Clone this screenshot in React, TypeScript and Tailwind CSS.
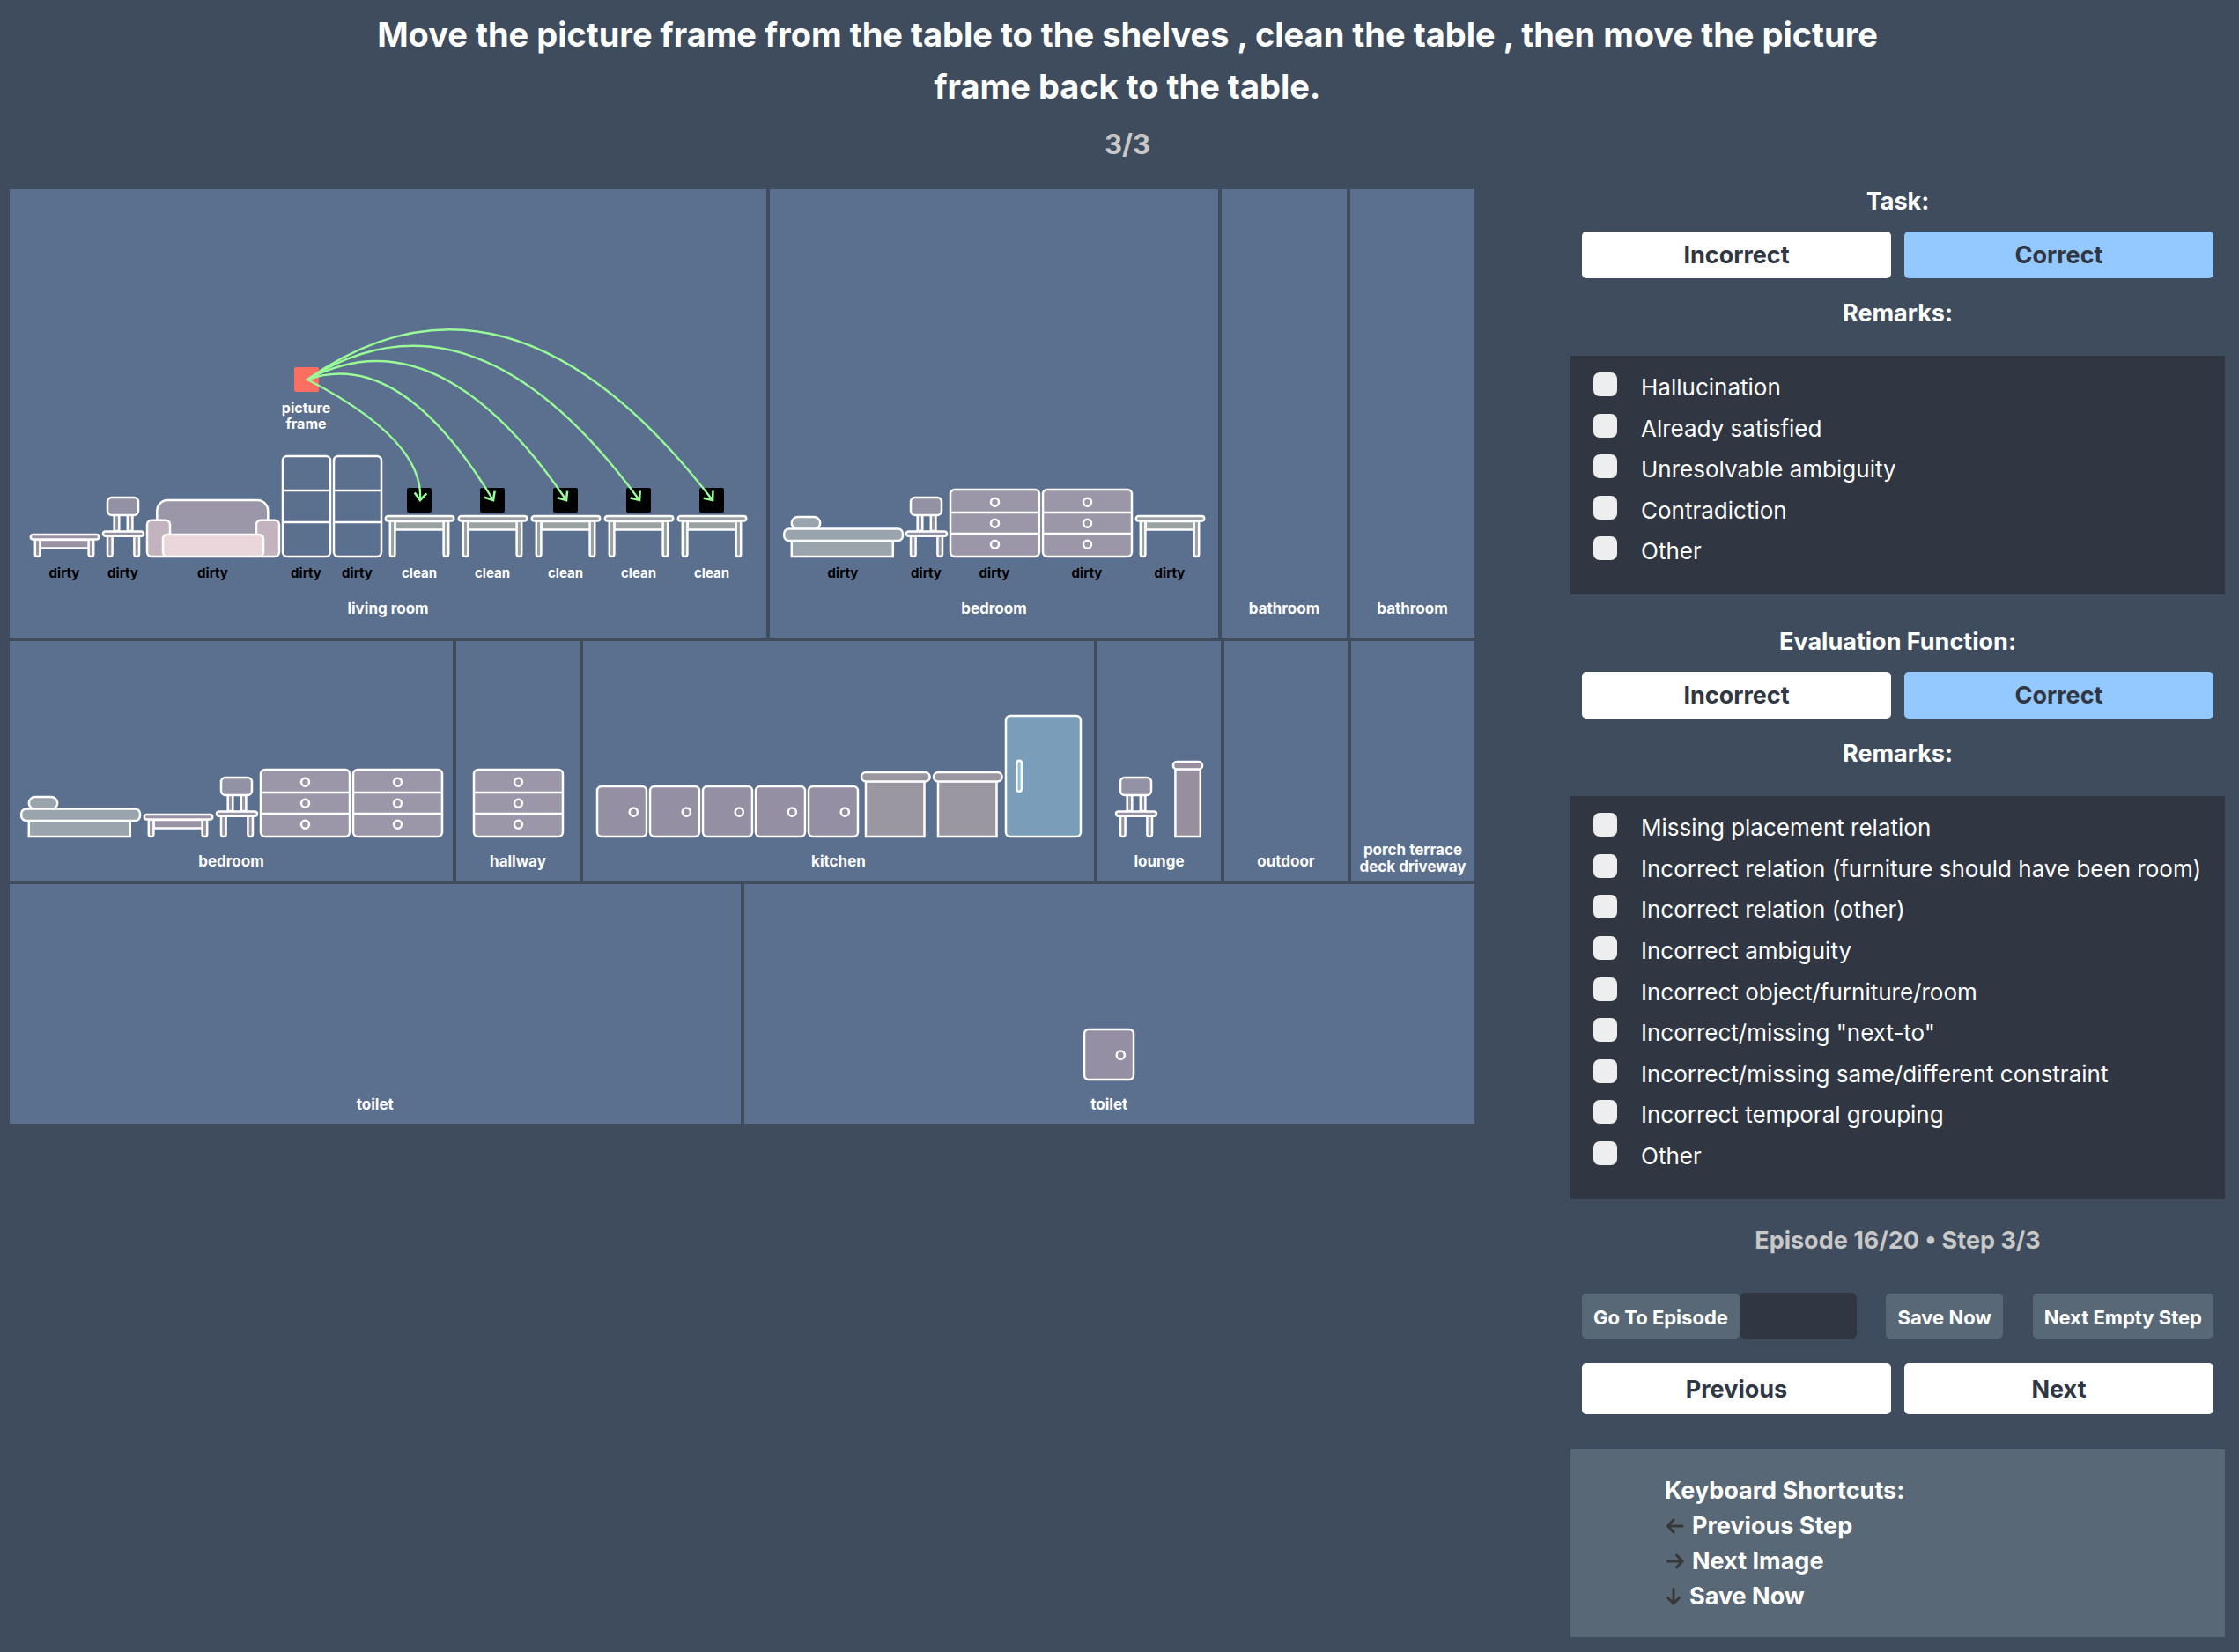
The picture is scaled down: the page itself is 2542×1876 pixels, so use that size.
import { useState, type ReactNode } from "react";

type Kind =
  | "coffee"
  | "chair"
  | "sofa"
  | "shelf"
  | "table"
  | "bed"
  | "dresser"
  | "cabinet"
  | "counter"
  | "fridge"
  | "stand";

const SIZES: Record<Kind, [number, number]> = {
  coffee: [81, 27],
  chair: [48, 69],
  sofa: [152, 66],
  shelf: [56, 116],
  table: [81, 48],
  bed: [137, 47],
  dresser: [103, 78],
  cabinet: [58, 59],
  counter: [80, 75],
  fridge: [87, 139],
  stand: [35, 87],
};

function TableShape({ height, fill }: { height: number; fill: string }) {
  return (
    <g fill={fill}>
      <rect x="12.5" y="7" width="56" height="9.5" />
      <rect x="6.8" y="6" width="5.6" height={height - 7} rx="2.8" />
      <rect x="67.6" y="6" width="5.6" height={height - 7} rx="2.8" />
      <rect x="1.8" y="1" width="77.4" height="5.4" rx="2.7" />
    </g>
  );
}

const SHAPES: Record<Kind, ReactNode> = {
  coffee: <TableShape height={27} fill="#9892a4" />,
  table: <TableShape height={48} fill="#9aa1a3" />,
  chair: (
    <g fill="#9392a5">
      <rect x="13.7" y="20" width="5.6" height="19" />
      <rect x="28.8" y="20" width="5.6" height="19" />
      <rect x="6" y="43" width="5.6" height="25" rx="2.8" />
      <rect x="36.4" y="43" width="5.6" height="25" rx="2.8" />
      <rect x="6" y="1" width="35" height="20" rx="5" />
      <rect x="1" y="39.4" width="46" height="5.4" rx="2.7" />
    </g>
  ),
  sofa: (
    <g>
      <path d="M12.3 50V13a12 12 0 0 1 12-12h102a12 12 0 0 1 12 12v37z" fill="#9b97a9" />
      <rect x="1" y="23.7" width="26" height="41.3" rx="5" fill="#c3b3be" />
      <rect x="125" y="23.7" width="26" height="41.3" rx="5" fill="#c3b3be" />
      <rect x="19" y="40" width="114" height="25" rx="5" fill="#e9d7db" />
    </g>
  ),
  shelf: (
    <g fill="none">
      <rect x="1" y="1" width="54" height="114" rx="5" />
      <path d="M1 40h54M1 76h54" />
    </g>
  ),
  bed: (
    <g fill="#9aa4ac">
      <rect x="9.8" y="28" width="115" height="18" />
      <rect x="9.8" y="1" width="32.4" height="14" rx="7" />
      <rect x="1.2" y="14.6" width="134.8" height="13.4" rx="5.5" />
    </g>
  ),
  dresser: (
    <g fill="#9b97a9">
      <rect x="1" y="1" width="101" height="76" rx="5" />
      <path d="M1 27h101M1 51h101" />
      <circle cx="51.5" cy="15.3" r="4.5" />
      <circle cx="51.5" cy="39.3" r="4.5" />
      <circle cx="51.5" cy="63.3" r="4.5" />
    </g>
  ),
  cabinet: (
    <g fill="#948fa2">
      <rect x="1" y="1" width="56" height="57" rx="5" />
      <circle cx="42.3" cy="30.2" r="4.6" />
    </g>
  ),
  counter: (
    <g fill="#9a97a1">
      <rect x="6" y="11" width="66.5" height="63" />
      <rect x="1" y="1" width="77.6" height="10.4" rx="5.2" />
    </g>
  ),
  fridge: (
    <g fill="#7a9db9">
      <rect x="1" y="1" width="85" height="137" rx="5" />
      <rect x="13.3" y="51.7" width="5.6" height="35" rx="2.8" fill="#8dc0d8" />
    </g>
  ),
  stand: (
    <g fill="#978f9e">
      <rect x="3.4" y="9" width="28.4" height="77" />
      <rect x="1" y="1" width="33" height="8.4" rx="4" />
    </g>
  ),
};

function Furniture({ kind }: { kind: Kind }) {
  const [w, h] = SIZES[kind];
  return (
    <svg width={w} height={h} viewBox={`0 0 ${w} ${h}`} stroke="#ffffff" strokeWidth="2.5" className="block shrink-0 overflow-visible" aria-hidden="true">
      {SHAPES[kind]}
    </svg>
  );
}

function Item({ kind, state, children }: { kind: Kind; state?: "dirty" | "clean"; children?: ReactNode }) {
  return (
    <div className="flex flex-col items-center">
      {children}
      <Furniture kind={kind} />
      {state && (
        <span className={state === "dirty" ? "mt-[9px] text-[15px] leading-[18px] text-black" : "mt-[9px] text-[15px] leading-[18px] text-white"}>
          {state}
        </span>
      )}
    </div>
  );
}

function Room({ name, tall, wide, children }: { name: string; tall?: boolean; wide?: boolean; children?: ReactNode }) {
  return (
    <section className={tall ? "flex flex-col items-center justify-end bg-[#5b6f8e] pb-[17px]" : "flex flex-col items-center justify-end bg-[#5b6f8e] pb-[6px]"}>
      <div className={tall ? "relative mb-4 flex items-end gap-[2px]" : wide ? "relative mb-3 flex items-end gap-[17px]" : "relative mb-3 flex items-end gap-[2px]"}>
        {children}
      </div>
      <h3 className="flex min-h-[31px] max-w-[130px] items-center text-center text-[17px] leading-[19px]">{name}</h3>
    </section>
  );
}

// Centre of the picture frame and of each target slot, in the living-room group's own space.
const ORIGIN = { x: 316, y: 88 };
const TARGETS = [444, 527, 610, 693, 776];
const TARGET_Y = 225;

function arcTo(x: number) {
  const dx = x - ORIGIN.x;
  const dy = TARGET_Y - ORIGIN.y;
  const mx = (x + ORIGIN.x) / 2;
  const my = (TARGET_Y + ORIGIN.y) / 2;
  const [cx, cy] = dx > dy ? [mx, my - dx / 2] : [mx + dy / 2, my];
  return `M${ORIGIN.x} ${ORIGIN.y}Q${cx} ${cy} ${x} ${TARGET_Y}`;
}

function Moves() {
  return (
    <svg width="816" height="317" viewBox="0 0 816 317" className="pointer-events-none absolute bottom-0 left-0" fill="none" stroke="#98fb98" strokeWidth="2.4" aria-hidden="true">
      <defs>
        <marker id="tip" markerUnits="userSpaceOnUse" markerWidth="24" markerHeight="24" viewBox="-12 -12 24 24" orient="auto">
          <path d="M-8 -6.8L0 0L-8 6.8" strokeWidth="2.6" />
        </marker>
      </defs>
      {TARGETS.map((x) => (
        <path key={x} d={arcTo(x)} strokeLinecap="round" markerEnd="url(#tip)" />
      ))}
    </svg>
  );
}

function House() {
  return (
    <div className="flex flex-col gap-1 font-bold text-white">
      <div className="grid min-h-[509px] grid-cols-[859fr_509fr_142fr_141fr] gap-1">
        <Room name="living room" tall>
          <Item kind="coffee" state="dirty" />
          <Item kind="chair" state="dirty" />
          <Item kind="sofa" state="dirty" />
          <Item kind="shelf" state="dirty">
            <div className="size-7 rounded-[2px] bg-[#ff6f61]" />
            <span className="mt-[9px] mb-[27px] text-center text-[16px] leading-[18px]">
              picture
              <br />
              frame
            </span>
          </Item>
          <Item kind="shelf" state="dirty" />
          {TARGETS.map((x) => (
            <Item key={x} kind="table" state="clean">
              <div className="mb-[3px] size-7 rounded-[2px] bg-black" />
            </Item>
          ))}
          <Moves />
        </Room>
        <Room name="bedroom" tall>
          <Item kind="bed" state="dirty" />
          <Item kind="chair" state="dirty" />
          <Item kind="dresser" state="dirty" />
          <Item kind="dresser" state="dirty" />
          <Item kind="table" state="dirty" />
        </Room>
        <Room name="bathroom" tall />
        <Room name="bathroom" tall />
      </div>
      <div className="grid min-h-[272px] grid-cols-[503fr_140fr_580fr_140fr_140fr_140fr] gap-1">
        <Room name="bedroom">
          <Item kind="bed" />
          <Item kind="coffee" />
          <Item kind="chair" />
          <Item kind="dresser" />
          <Item kind="dresser" />
        </Room>
        <Room name="hallway">
          <Item kind="dresser" />
        </Room>
        <Room name="kitchen">
          <Item kind="cabinet" />
          <Item kind="cabinet" />
          <Item kind="cabinet" />
          <Item kind="cabinet" />
          <Item kind="cabinet" />
          <Item kind="counter" />
          <Item kind="counter" />
          <Item kind="fridge" />
        </Room>
        <Room name="lounge" wide>
          <Item kind="chair" />
          <Item kind="stand" />
        </Room>
        <Room name="outdoor" />
        <Room name="porch terrace deck driveway" />
      </div>
      <div className="grid min-h-[272px] grid-cols-2 gap-1">
        <Room name="toilet" />
        <Room name="toilet">
          <Item kind="cabinet" />
        </Room>
      </div>
    </div>
  );
}

const TASK_REMARKS = ["Hallucination", "Already satisfied", "Unresolvable ambiguity", "Contradiction", "Other"];
const EVAL_REMARKS = [
  "Missing placement relation",
  "Incorrect relation (furniture should have been room)",
  "Incorrect relation (other)",
  "Incorrect ambiguity",
  "Incorrect object/furniture/room",
  'Incorrect/missing "next-to"',
  "Incorrect/missing same/different constraint",
  "Incorrect temporal grouping",
  "Other",
];

function Review({ title, remarks, long }: { title: string; remarks: string[]; long?: boolean }) {
  const [verdict, setVerdict] = useState("Correct");
  return (
    <section>
      <h2 className="mb-[13px] text-center text-[27px] leading-[42px] font-bold text-white">{title}</h2>
      <div className="grid grid-cols-2 gap-[15px] px-[13px]">
        {["Incorrect", "Correct"].map((label) => (
          <button
            key={label}
            type="button"
            aria-pressed={verdict === label}
            onClick={() => setVerdict(label)}
            className={
              verdict === label
                ? "h-[53px] rounded-[5px] bg-[#94c9ff] text-[27px] leading-[42px] font-bold text-[#303642]"
                : "h-[53px] rounded-[5px] bg-white text-[27px] leading-[42px] font-bold text-[#303642]"
            }
          >
            {label}
          </button>
        ))}
      </div>
      <h3 className="mt-[19px] mb-[27px] text-center text-[27px] leading-[42px] font-bold text-white">Remarks:</h3>
      <div className="bg-[#303642] px-[26px] pt-[19px] pb-[39px]">
        <ul className={long ? "flex min-h-[400px] flex-col justify-between" : "flex min-h-[213px] flex-col justify-between"}>
          {remarks.map((remark) => (
            <li key={remark}>
              <label className="flex h-[27px] items-start text-[26px] text-white">
                <input type="checkbox" className="mr-[27px] size-[27px] shrink-0 appearance-none rounded-[7px] bg-[#eeeeee] checked:bg-[#94c9ff]" />
                <span className="leading-[34px] whitespace-nowrap">{remark}</span>
              </label>
            </li>
          ))}
        </ul>
      </div>
    </section>
  );
}

function Arrow({ d, width }: { d: string; width: number }) {
  return (
    <svg width={width} height="20" viewBox={`0 0 ${width} 20`} fill="none" stroke="#383838" strokeWidth="3" strokeLinecap="round" strokeLinejoin="round" aria-hidden="true">
      <path d={d} />
    </svg>
  );
}

export default function App() {
  const [episode, setEpisode] = useState("");
  const small = "h-[51px] rounded-[5px] bg-[#596876] px-[13px] pt-[2px] text-[22px] leading-[30px] font-bold whitespace-nowrap text-white";
  const big = "h-[58px] rounded-[5px] bg-white pt-[2px] text-[27px] leading-[42px] font-bold text-[#303642]";
  return (
    <div className="min-h-screen bg-[#3e4c5e] font-['Inter',sans-serif]">
      <header className="pt-[10px] pr-4 pl-[34px] text-center">
        <h1 className="mx-auto max-w-[1760px] text-[38px] leading-[59px] font-bold text-white">
          Move the picture frame from the table to the shelves , clean the table , then move the picture frame back to the table.
        </h1>
        <p className="mt-4 text-[31px] leading-10 font-bold text-[#c8c8c8]">3/3</p>
      </header>
      <main className="mt-6 grid grid-cols-[1663fr_743fr] gap-[109px] pr-4 pl-[11px]">
        <div className="pt-[7px]">
          <House />
        </div>
        <aside>
          <div className="flex flex-col gap-[33px]">
            <Review title="Task:" remarks={TASK_REMARKS} />
            <Review title="Evaluation Function:" remarks={EVAL_REMARKS} long />
          </div>
          <p className="mt-[26px] text-center text-[27px] leading-[42px] font-bold text-[#c8c8c8]">Episode 16/20 • Step 3/3</p>
          <div className="mt-[38px] flex items-center justify-between px-[13px]">
            <form className="flex items-center" onSubmit={(e) => e.preventDefault()}>
              <button type="submit" className={small}>
                Go To Episode
              </button>
              <input
                aria-label="Episode number"
                value={episode}
                onChange={(e) => setEpisode(e.target.value)}
                className="h-[53px] w-[133px] rounded-[7px] bg-[#303642] px-3 text-[22px] text-white"
              />
            </form>
            <button type="button" className={small}>
              Save Now
            </button>
            <button type="button" className={small}>
              Next Empty Step
            </button>
          </div>
          <div className="mt-[27px] grid grid-cols-2 gap-[15px] px-[13px]">
            <button type="button" className={big}>
              Previous
            </button>
            <button type="button" className={big}>
              Next
            </button>
          </div>
          <section className="mt-10 bg-[#596876] px-[107px] pt-[27px] pb-[26px] text-[27px] leading-10 font-bold text-white">
            <h2>Keyboard Shortcuts:</h2>
            <ul>
              <li className="flex items-center gap-2">
                <Arrow width={23} d="M20 10H3.5M10 3L3.5 10L10 17" />
                Previous Step
              </li>
              <li className="flex items-center gap-2">
                <Arrow width={23} d="M3.5 10H20M13.5 3L20 10L13.5 17" />
                Next Image
              </li>
              <li className="flex items-center gap-2">
                <Arrow width={20} d="M10 1.5V18M3.5 11.5L10 18L16.5 11.5" />
                Save Now
              </li>
            </ul>
          </section>
        </aside>
      </main>
    </div>
  );
}
